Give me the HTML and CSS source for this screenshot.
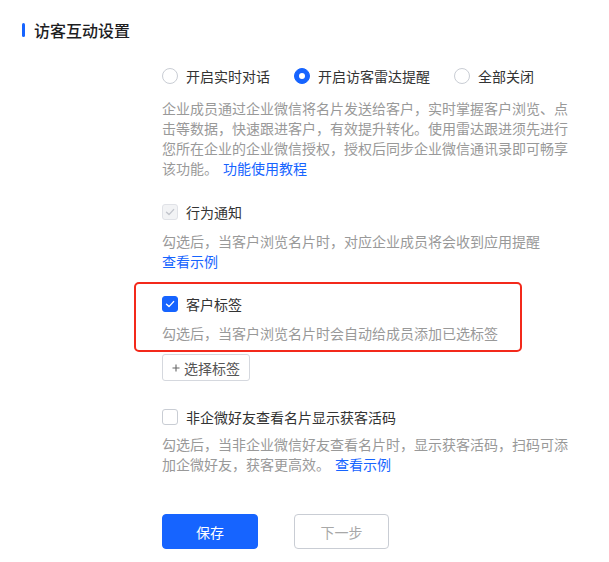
FILE: index.html
```html
<!DOCTYPE html>
<html lang="zh-CN">
<head>
<meta charset="utf-8">
<title>访客互动设置</title>
<link rel="stylesheet" href="styles.css">
</head>
<body>
<div class="page">
  <div class="section-title"><span class="title-bar"></span><span class="title-text">访客互动设置</span></div>

  <div class="content">
    <div class="radio-group">
      <label class="radio"><span class="radio-circle"></span><span class="radio-label">开启实时对话</span></label>
      <label class="radio"><span class="radio-circle checked"></span><span class="radio-label">开启访客雷达提醒</span></label>
      <label class="radio"><span class="radio-circle"></span><span class="radio-label">全部关闭</span></label>
    </div>

    <p class="desc intro">企业成员通过企业微信将名片发送给客户，实时掌握客户浏览、点击等数据，快速跟进客户，有效提升转化。使用雷达跟进须先进行您所在企业的企业微信授权，授权后同步企业微信通讯录即可畅享该功能。<a class="link">功能使用教程</a></p>

    <div class="option option-behavior">
      <label class="checkbox">
        <span class="box disabled"><svg viewBox="0 0 16 16" width="16" height="16"><path d="M4.5 8.2 L7 10.6 L11.6 5.6" fill="none" stroke="#c2c5cc" stroke-width="1.4" stroke-linecap="round" stroke-linejoin="round"/></svg></span>
        <span class="check-label">行为通知</span>
      </label>
      <p class="desc opt-desc">勾选后，当客户浏览名片时，对应企业成员将会收到应用提醒<br><a class="link plain">查看示例</a></p>
    </div>

    <div class="highlight">
      <label class="checkbox">
        <span class="box checked"><svg viewBox="0 0 16 16" width="16" height="16"><path d="M4.5 8.2 L7 10.6 L11.6 5.6" fill="none" stroke="#ffffff" stroke-width="1.4" stroke-linecap="round" stroke-linejoin="round"/></svg></span>
        <span class="check-label">客户标签</span>
      </label>
      <p class="desc tag-desc">勾选后，当客户浏览名片时会自动给成员添加已选标签</p>
    </div>

    <button class="tag-btn" type="button"><svg viewBox="0 0 8 8" width="8" height="8"><path d="M4 0.5 V7.5 M0.5 4 H7.5" stroke="#666" stroke-width="1.1" fill="none"/></svg><span>选择标签</span></button>

    <div class="option option-qr">
      <label class="checkbox">
        <span class="box"></span>
        <span class="check-label">非企微好友查看名片显示获客活码</span>
      </label>
      <p class="desc opt-desc">勾选后，当非企业微信好友查看名片时，显示获客活码，扫码可添加企微好友，获客更高效。<a class="link">查看示例</a></p>
    </div>

    <div class="actions">
      <button class="btn btn-primary" type="button">保存</button>
      <button class="btn btn-default" type="button">下一步</button>
    </div>
  </div>
</div>
</body>
</html>
```

FILE: styles.css
```css
* { box-sizing: border-box; }

html, body {
  margin: 0;
  padding: 0;
  background: #ffffff;
}

body {
  font-family: "PingFang SC", "Noto Sans CJK SC", "Noto Sans", sans-serif;
  font-size: 14px;
  color: #333333;
}

.page {
  padding-top: 20px;
}

.section-title {
  display: flex;
  align-items: center;
  height: 20px;
  padding-left: 22px;
}

.title-bar {
  width: 3px;
  height: 14px;
  border-radius: 2px;
  background: #1664ff;
  margin-right: 9px;
}

.title-text {
  font-size: 16px;
  font-weight: 500;
  color: #1d1d1f;
  line-height: 20px;
}

.content {
  padding-left: 162px;
  width: 574px;
}

.radio-group {
  display: flex;
  align-items: center;
  gap: 24px;
  height: 20px;
  margin-top: 26px;
}

.radio {
  display: flex;
  align-items: center;
  gap: 8px;
  line-height: 20px;
}

.radio-circle {
  width: 16px;
  height: 16px;
  border-radius: 50%;
  border: 1px solid #c9cdd4;
  background: #fff;
  display: flex;
  align-items: center;
  justify-content: center;
}

.radio-circle.checked {
  border-color: #1664ff;
  background: #1664ff;
}

.radio-circle.checked::after {
  content: "";
  width: 6px;
  height: 6px;
  border-radius: 50%;
  background: #fff;
}

.radio-label {
  color: #333;
}

.desc {
  margin: 0;
  color: #999999;
  line-height: 20px;
  width: 410px;
}

.intro {
  margin-top: 12px;
}

.link {
  color: #1664ff;
  margin-left: 5px;
  cursor: pointer;
}

.link.plain {
  margin-left: 0;
}

.checkbox {
  display: flex;
  align-items: center;
  gap: 8px;
  height: 20px;
  line-height: 20px;
}

.box {
  width: 16px;
  height: 16px;
  border-radius: 3px;
  border: 1px solid #c9cdd4;
  background: #fff;
  display: flex;
  align-items: center;
  justify-content: center;
  overflow: hidden;
}

.box svg {
  flex: none;
}

.box.disabled {
  background: #f2f3f5;
  border-color: #e0e2e7;
}

.box.checked {
  background: #1664ff;
  border-color: #1664ff;
}

.check-label {
  color: #333;
}

.option-behavior {
  margin-top: 24px;
}

.opt-desc {
  margin-top: 9px;
}

.highlight {
  margin-top: 11px;
  margin-left: -28px;
  width: 388px;
  border: 2px solid #f3291b;
  border-radius: 5px;
  padding: 10px 0 7px 26px;
}

.tag-desc {
  margin-top: 9px;
  width: auto;
}

.tag-btn {
  display: flex;
  align-items: center;
  gap: 4px;
  margin-top: 2px;
  height: 27px;
  width: 88px;
  padding: 0 0 0 9px;
  border: 1px solid #d5d8de;
  border-radius: 3px;
  background: #fff;
  font-family: inherit;
  font-size: 14px;
  color: #555;
  line-height: 20px;
}

.option-qr {
  margin-top: 26px;
}

.option-qr .opt-desc {
  margin-top: 7px;
}

.actions {
  display: flex;
  gap: 36px;
  margin-top: 40px;
}

.btn {
  height: 35px;
  border-radius: 4px;
  font-family: inherit;
  font-size: 14px;
  line-height: 20px;
  padding: 0;
}

.btn-primary {
  width: 96px;
  background: #1664ff;
  border: 1px solid #1664ff;
  color: #fff;
}

.btn-default {
  width: 95px;
  background: #fff;
  border: 1px solid #c9cdd4;
  color: #a8a8a8;
}
```
